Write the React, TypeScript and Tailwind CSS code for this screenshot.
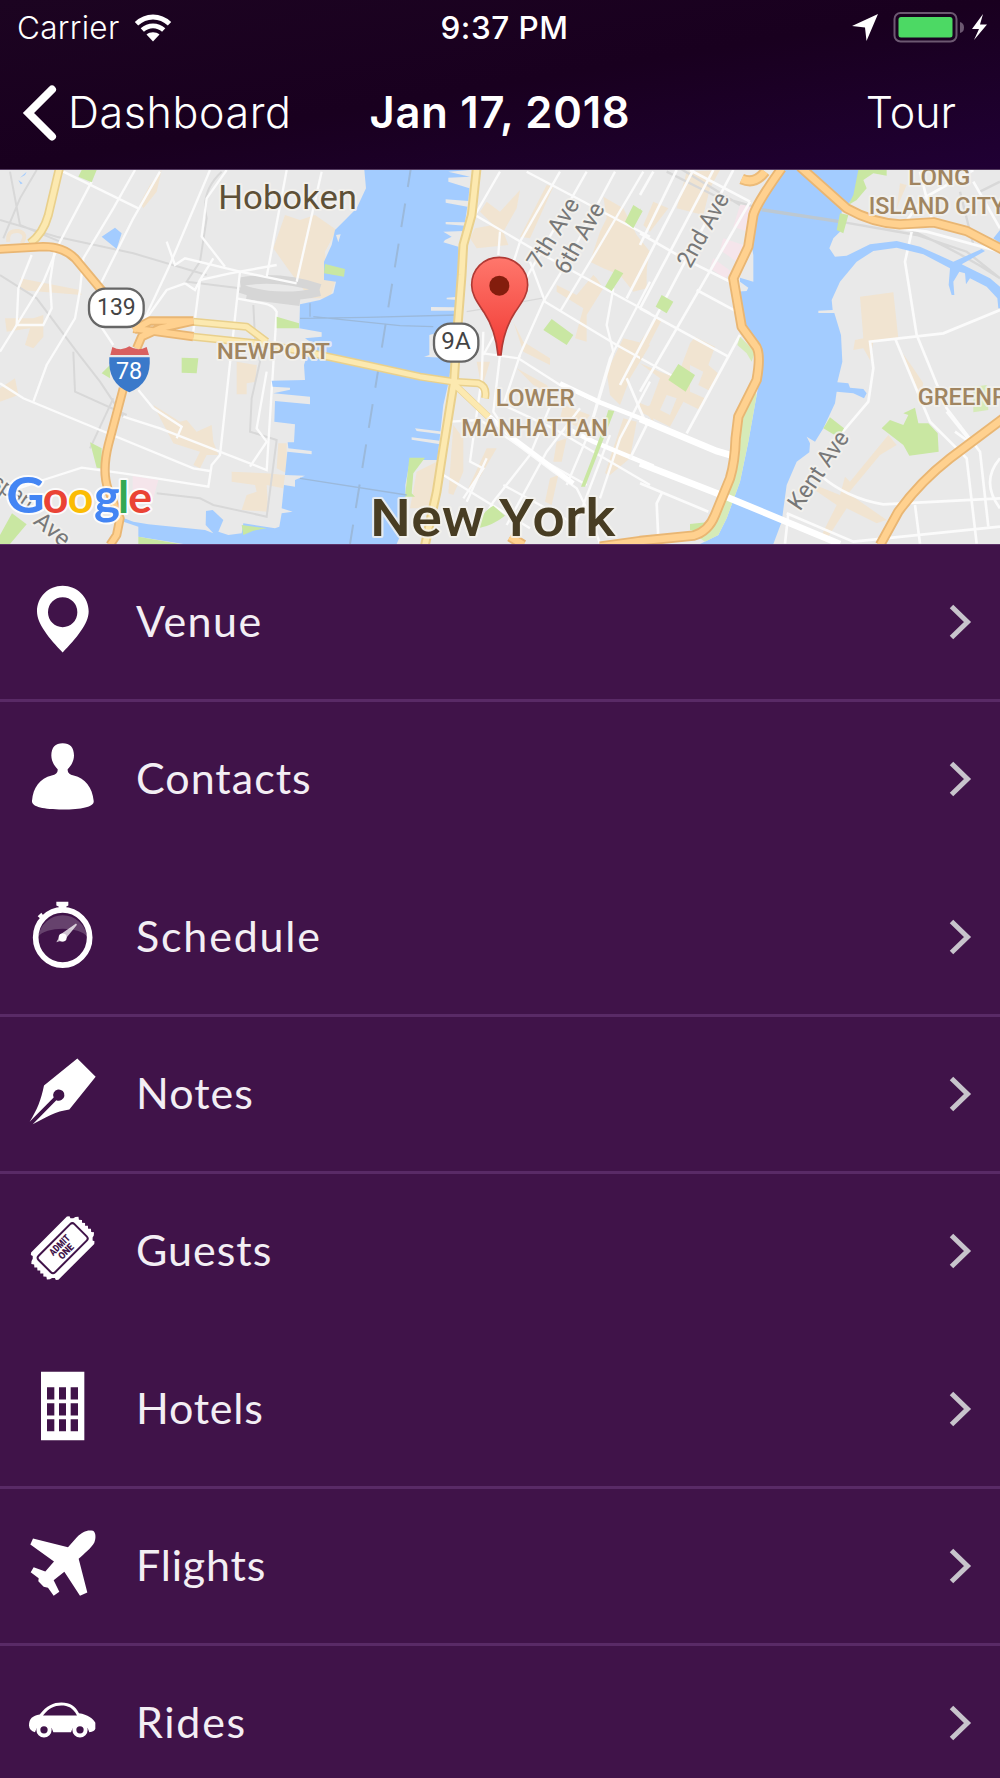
import { ReactNode } from "react";

interface RowProps {
    label: string;
    icon: ReactNode;
    viewBox: string;
    tracking: string;
    divider?: boolean;
}

const rows: RowProps[] = [
    {
        label: "Venue",
        viewBox: "84 66.6 210 240",
        tracking: "tracking-[1.5px]",
        divider: true,
        icon: <path fillRule="evenodd" d="M188 78C145 78 111 112 111 155C111 192 148 236 188 278C228 236 266 192 266 155C266 112 231 78 188 78ZM188 112A44 45 0 1 1 188 202A44 45 0 1 1 188 112Z" />,
    },
    {
        label: "Contacts",
        viewBox: "84 538.5 210 240",
        tracking: "tracking-[1px]",
        icon: <path d="M188 551C166 551 154 563 154 588C154 605 164 621 173 629C174 640 168 645 155 648C120 656 99 684 96 724C94 742 130 750 188 750C246 750 284 742 281 724C277 684 256 656 221 648C208 645 202 640 203 629C212 621 222 605 222 588C222 563 210 551 188 551Z" />,
    },
    {
        label: "Schedule",
        viewBox: "84 80.5 210 240",
        tracking: "tracking-[1.8px]",
        divider: true,
        icon: <>
            <path d="M114 200A75 77 0 0 1 262 200C240 168 136 168 114 200Z" fillOpacity="0.2" />
            <ellipse cx="188" cy="202" rx="81" ry="83" fill="none" stroke="white" strokeWidth="17" />
            <path d="M169 95H205V106L199 109V119H176V109L169 106ZM113 138L124 128L130 136L138 138L122 154L120 144Z" />
            <path d="M169 216L182 192L228 160L231 164L198 204L190 214L178 213Z" fillOpacity="0.75" />
            <circle cx="188" cy="202" r="12" />
        </>,
    },
    {
        label: "Notes",
        viewBox: "84 552.5 210 240",
        tracking: "tracking-[1px]",
        divider: true,
        icon: <path d="M232 566L287 621L208 719C165 725 143 740 98 763L169 691A17 17 0 1 0 161 683L89 756C112 718 123 691 132 647Z" />,
    },
    {
        label: "Guests",
        viewBox: "84 94.5 210 240",
        tracking: "tracking-[1px]",
        icon: <g transform="rotate(-45 188 206)">
            <path d="M112 148H264L270 153L268 159L274 165L281 167L288 173L283 180L289 187L283 193L289 200L283 206L289 212L283 219L289 225L283 232L288 239L281 245L274 247L268 253L270 259L264 264H112L106 259L108 253L102 247L95 245L88 239L93 232L87 225L93 219L87 212L93 206L87 200L93 193L87 187L93 180L88 173L95 167L102 165L108 159L106 153Z" />
            <rect x="112" y="171" width="152" height="70" rx="9" fill="none" stroke="#401349" strokeWidth="6" />
            <g fontFamily="Roboto, sans-serif" fontWeight="900" fontSize="30" fill="#401349" textAnchor="middle">
                <text x="188" y="203" textLength="74" lengthAdjust="spacingAndGlyphs">ADMIT</text>
                <text x="188" y="230" textLength="52" lengthAdjust="spacingAndGlyphs">ONE</text>
            </g>
        </g>,
    },
    {
        label: "Hotels",
        viewBox: "84 566.5 210 240",
        tracking: "tracking-[0.8px]",
        divider: true,
        icon: <path fillRule="evenodd" d="M123 575H253V780H123ZM141 621V658H163V621ZM177 621V658H198V621ZM212 621V658H234V621ZM141 669V706H163V669ZM177 669V706H198V669ZM212 669V706H234V669ZM141 717V753H163V717ZM177 717V753H198V717ZM212 717V753H234V717Z" />,
    },
    {
        label: "Flights",
        viewBox: "84 108.5 210 240",
        tracking: "tracking-[0.8px]",
        divider: true,
        icon: <path d="M99 146L204 172L230 143C247 124 264 119 279 123C288 128 288 146 283 158C275 174 252 192 236 207L262 308L240 318L193 246L161 271L178 306L161 318L144 294L131 291L115 274L116 265L92 247L101 232L136 245L162 215L91 164Z" />,
    },
    {
        label: "Rides",
        viewBox: "84 580.5 210 240",
        tracking: "tracking-[1.7px]",
        icon: <>
            <path fillRule="evenodd" d="M119 675C140 648 160 639 184 639C211 639 226 650 237 671C263 675 280 687 286 700V718Q284 727 268 728A28 28 0 0 0 213 728H160A28 28 0 0 0 105 728Q88 724 87 708C87 688 98 678 119 675ZM129 678H231C219 655 204 648 184 648C163 648 147 656 129 678Z" />
            <circle cx="132" cy="721" r="17" fill="none" stroke="white" strokeWidth="12" />
            <circle cx="240" cy="721" r="17" fill="none" stroke="white" strokeWidth="12" />
        </>,
    },
];

function Row(props: RowProps) {
    return <div className={`flex h-[157.33px] shrink-0 items-center border-b-[3px] pl-7 pr-[28px] ${props.divider ? "border-[#592a66]" : "border-transparent"}`}>
        <svg viewBox={props.viewBox} className="h-20 w-[70px] shrink-0" fill="white">{props.icon}</svg>
        <span className={`ml-[38px] flex-1 pb-[3px] font-['Lato',sans-serif] text-[43px] font-normal leading-none text-[#f3eef4] ${props.tracking}`}>{props.label}</span>
        <svg viewBox="0 0 24 40" className="h-10 w-6" fill="none" stroke="#c8c4cc" strokeWidth="5">
            <path d="M3.5 4.5L19.5 20L3.5 35.5" />
        </svg>
    </div>
}

function StatusBar() {
    return <div className="grid h-14 grid-cols-[1fr_auto_1fr] items-center pl-[17px] pr-[13px] font-['Inter',sans-serif] text-[31.5px] leading-none">
        <div className="flex items-center">
            <span className="w-[102px] whitespace-nowrap font-[350] tracking-[0.3px]">Carrier</span>
            <svg viewBox="0 0 38 28" className="ml-[15px] h-7 w-[38px]">
                <g fill="none" stroke="white" strokeWidth="4.9">
                    <path d="M2.5 9.8C12 0.7 26 0.7 35.5 9.8" />
                    <path d="M8.3 16C14.5 10.5 23.5 10.5 29.7 16" />
                </g>
                <path fill="white" d="M12.5 20.5C16 17.5 22 17.5 25.5 20.5L19 27.5Z" />
            </svg>
        </div>
        <span className="whitespace-nowrap pl-[5px] font-medium tracking-[0.5px]">9:37 PM</span>
        <svg viewBox="0 0 135 32" className="h-8 w-[135px] justify-self-end">
            <path fill="white" d="M26 2L14.5 29L13 15.5L0 14Z" />
            <rect x="42.5" y="1" width="62" height="28.5" rx="6" fill="none" stroke="#6c5871" strokeWidth="2" />
            <rect x="46.5" y="5" width="54" height="20.5" rx="2.5" fill="#4cd964" />
            <path fill="#6c5871" d="M108 10Q112 11 112 15.5Q112 20 108 21Z" />
            <path fill="white" d="M131 2L120 17H127L122 28L135 12.5H128Z" />
        </svg>
    </div>
}

function NavBar() {
    return <div className="grid h-[113px] grid-cols-[1fr_auto_1fr] items-center px-[22px] font-['Inter',sans-serif] text-[43px] leading-none">
        <div className="flex items-center">
            <svg viewBox="0 0 36 58" className="h-[58px] w-9" fill="none" stroke="white" strokeWidth="8" strokeLinecap="round" strokeLinejoin="miter">
                <path d="M30 5.5L6.5 29L30 52.5" />
            </svg>
            <span className="ml-[10px] whitespace-nowrap font-[350] tracking-[0.6px]">Dashboard</span>
        </div>
        <span className="whitespace-nowrap text-[43.5px] font-semibold tracking-[0.75px]">Jan 17, 2018</span>
        <span className="pr-[22px] text-right font-[350]">Tour</span>
    </div>
}

const whiteRoads = [
    "M190 20L415 130",
    "M275 50L180 230L130 350L50 480L0 560",
    "M405 15L340 130L250 280L240 375L225 460L140 600L100 710",
    "M630 15L505 310L430 470",
    "M680 15L620 100L605 215L675 305",
    "M860 15L800 335",
    "M500 230L525 300L555 280L720 320L890 355",
    "M965 20L890 350",
    "M480 20L400 160L290 380",
    "M95 270L55 370L50 480L130 480L155 430L150 350L165 250",
    "M720 320L660 870L635 900L625 965L470 940L370 925L245 908L130 945L0 990",
    "M640 280L600 345L580 500",
    "M0 655L70 700L300 795L580 910L630 918",
    "M370 755L480 790L800 915L830 440Q820 420 790 415L710 400",
    "M800 620L770 790L800 830L750 905",
    "M300 480L340 540M415 675L460 730L545 785L530 820",
    "M555 355L585 375L600 345L690 325L830 300M555 355L500 375L425 480",
];

const eastRoads = [
    "M600 20L525 150L730 270L1050 445",
    "M680 20L1050 215",
    "M780 20L660 230L600 420",
    "M860 20L650 390L550 570",
    "M945 20L790 310L730 410L655 580",
    "M1030 20L900 240L780 440",
    "M1050 350L930 580L860 820L800 960",
    "M600 200L595 270M690 290L735 410L950 540L1130 640",
    "M940 370L920 480L940 560L880 760",
    "M430 930L560 1010L690 1090",
    "M550 565L655 580L780 660L900 715",
    "M600 570L580 740L640 830L760 920L830 970L870 1050L900 1136",
    "M660 570L610 720L760 790L1050 960",
    "M550 500L545 640L510 890L550 910L490 1000",
    "M450 770L540 765L700 870L860 960",
    "M760 700L690 870L580 1010L540 1080",
    "M840 730L740 860L620 1080",
    "M930 810L850 1020L820 1090",
    "M1050 650L960 820L900 1000",
    "M560 880L500 1010M610 960L830 1080",
];

const fineRoads = [
    "M40 20L0 90M110 15L0 240M160 15L-40 400M220 15L0 430M280 15L-60 660",
    "M330 110L180 370L0 680M300 510L140 805",
    "M150 15L330 110M0 205L130 280L290 360M170 375L300 445",
    "M0 430L265 575M-40 640L20 780L-30 880",
    "M815 200L795 290L830 510L920 730L1020 860L1045 1085",
    "M1080 435L910 505L690 530L700 610L685 710L600 810",
    "M765 520L870 770L980 880L1010 1136",
    "M920 740L1000 840L945 800",
    "M0 955L205 1040M65 985L50 1015L55 1120",
    "M540 930Q620 1000 730 1018L1080 1000M825 1020L840 1136",
    "M440 1045L640 1130L1080 1085M445 1045L435 1136M1080 880Q1020 950 1080 1030",
    "M780 190L860 200L1080 260M790 180L850 100L1000 15M840 20L880 180M1000 50L1080 190",
];

interface LabelProps {
    x?: number;
    y?: number;
    width?: number;
    size?: number;
    transform?: string;
    children: string;
}

function Label(props: LabelProps) {
    return <text x={props.x} y={props.y} fontSize={props.size} transform={props.transform} textLength={props.width} lengthAdjust="spacingAndGlyphs">{props.children}</text>
}

// Map units are a third of a pixel; the Manhattan and Queens groups carry their own offset.
function MapView() {
    return <svg viewBox="0 15 3000 1122" className="block h-[374px] w-full shrink-0 bg-[#e9e9e9]" preserveAspectRatio="none" fontFamily="Roboto, sans-serif">
        <g fill="#f1e4d1">
            <path d="M855 150L900 165L945 150L1010 195L975 260L980 325L1005 350L990 400L930 400L870 320L820 250Z" />
            <path d="M60 340L240 375L245 390L60 375ZM15 460L100 460L130 450V515L100 550L75 540L90 490L20 500ZM0 670L45 640L55 690L0 710Z" />
            <path d="M710 590L770 600L768 650L740 655V688H710ZM460 720L540 770L560 765L590 800L635 780L640 830L655 870L620 870L600 910L580 900L600 860L520 835Z" />
            <path d="M695 920L800 925L855 930L850 970L800 960L805 1040L725 1035L740 990L770 980L765 960L695 950ZM835 835H860V925L830 910ZM450 60L485 15L470 80L430 130L420 115Z" />
            <path fill="none" stroke="#f1e4d1" strokeWidth="12" d="M25 230Q20 195 55 198Q85 205 65 235" />
        </g>
        <path fill="#f5e5eb" d="M398 932L475 945L460 1000L398 985Z" />
        <path fill="#a3ccff" d="M305 215L345 188L365 205L350 252ZM60 38L80 20L75 30ZM55 45L68 55L62 58Z" />
        <g fill="none" stroke="#d8d8d8" strokeWidth="6">
            <path d="M0 165L170 215L400 265L620 330M30 20L60 180L180 230M110 15L60 100L10 220M0 330L110 400L230 560L300 650L370 755M220 560L225 680L380 750M340 700L270 850" />
            <path d="M665 20Q600 80 620 160L600 290L560 350L720 370M760 420L765 520L780 590L755 700L750 800L830 825L800 1055L640 1020L600 1000L470 985" />
            <path d="M720 350Q840 330 960 370M720 370Q830 410 960 380M740 390L900 410" strokeWidth="26" stroke="#d6d6d6" />
        </g>
        <g fill="none" stroke="#fbfbfb" strokeWidth="7">
            {whiteRoads.map((d) => <path key={d} d={d} />)}
        </g>
        <g fill="#c9e7a2">
            <path d="M235 35L245 15H290L275 52ZM545 578L595 580L590 625L545 623ZM305 625L330 600V640ZM270 832L305 850V910L290 908ZM36 1045L80 1078L30 1137H0V1110ZM830 455L897 475V490H830Z" />
        </g>

        <g transform="translate(900 0)">
            <path fill="#f1e4d1" d="M560 110L600 140L660 75L650 130L610 200L625 240L530 250L510 220L525 190L580 180L540 140ZM740 60L760 65L690 220L660 215ZM910 95L970 130L1010 210L1050 260L1040 310L1040 370L1000 380L960 330L910 310L870 290L900 200L920 160ZM770 360L830 390L880 330L890 340L910 370L860 450L860 530L825 520L850 430L770 380ZM640 470L670 530L750 580V600L670 560ZM650 610L740 660L760 690L700 660ZM970 520L1050 540L990 640L960 720L930 690L920 620ZM790 720L870 750L840 790L780 760ZM460 780L490 820V920L460 990L445 985ZM560 850L590 850L520 970L505 970ZM970 760L1010 770L990 880L930 930L915 925ZM770 830L800 820L785 890H760ZM750 940L775 930L755 1020L735 1010ZM350 920L410 890L390 1030L330 1030ZM530 590L570 590L545 670ZM1010 710L1060 730V770Z" />
            <path fill="none" stroke="#d8d8d8" strokeWidth="4" d="M500 440L560 430L735 398" />
            <g fill="none" stroke="#fbfbfb" strokeWidth="7">
                {eastRoads.map((d) => <path key={d} d={d} />)}
            </g>
            <path fill="none" stroke="white" strokeWidth="14" d="M780 655L900 712L1060 775M800 790L880 830L1060 905M465 660L640 820L820 955" />
            <path fill="#a3ccff" d="M193 15L198 70L170 130L130 170L105 195L95 240L72 290V345L108 350L100 385L60 405L0 418L-2 490L65 502V515L15 520L45 540L25 560L12 600L15 645L-85 647L-82 665L-30 668L-30 674L-80 685L30 695V718L-75 708L-77 770L-15 778L-18 832L-37 832L-35 850L35 858V868L-38 860L-45 930L15 932L-15 945V965L-48 960L-55 1030L-22 1040L-55 1045L-62 1085L-75 1090L-170 1075L-175 1105L-215 1110L-245 1100L-230 1065L-262 1035L-282 1038L-283 1080L-260 1105L-285 1095L-455 1078L-500 1070L-540 1055L-545 1065L-485 1085V1115L-350 1137H290L310 1090L318 1030L316 960L330 885H412L430 720L445 655L455 590L455 580L372 575L388 570V510L460 490L475 437L393 437V426L470 427L475 405L440 403V398L475 395L480 280L475 245L430 232L435 225L455 215L430 200L490 198L495 182L437 178V171L495 172L502 125L437 113V103L505 108L508 70L445 50V38L510 35L445 20L510 15Z" />
            <path fill="#e9e9e9" d="M345 790L430 800L425 808L350 798ZM335 817L425 828L420 838L335 824ZM108 210L122 208L115 232Z" />
            <path fill="#c9e7a2" d="M75 297L135 312L132 335L72 325ZM328 878H375L340 925L335 985L345 995L315 995ZM975 170L1000 120L1028 138L1000 190ZM915 365L945 312L970 325L935 378ZM730 495L755 462L820 510L800 540ZM925 735L943 738L855 965L843 965L880 870L905 800ZM535 1085Q545 1040 580 1022L615 1052Q580 1080 535 1090ZM-175 1080L-100 1090L-140 1097L-170 1110ZM-485 1115L-360 1137H-485Z" />
            <g fill="none" stroke="#9bb9db" strokeWidth="4">
                <path strokeWidth="6" strokeDasharray="72 50" d="M335 -5L150 1137" />
                <path d="M0 460L200 457L470 450M40 455L300 482L400 485M0 940L320 990M30 415V455" />
            </g>
        </g>

        <g transform="translate(1920 0)">
            <path fill="#f1e4d1" d="M140 20L240 15L210 70L190 150L110 130ZM40 110L85 130L30 200L10 180ZM660 395L760 382L775 520L700 530L690 585L670 550L640 555L645 525L670 520ZM820 610L850 655L840 700L770 540ZM0 595L60 620L110 640L150 535L165 515L225 545L205 600L240 630L180 735L130 710L90 785L0 740L30 720L60 640ZM745 810L770 840L720 870L625 985L740 1065L710 1075L620 1030L555 1130L540 1120L590 1020L510 965L525 960L600 990L615 935L630 950ZM780 55L800 60L770 130ZM0 300L20 310L15 370L0 370ZM0 530L50 460L65 465L0 590ZM0 715L40 750L0 740Z" />
            <path fill="#e9e9e9" d="M150 600L190 620L175 660L215 680L195 700L150 680ZM80 690L110 700L90 750L60 735Z" />
            <path fill="#f5e5eb" d="M300 120H335V205L280 185ZM250 220L310 240L290 290L240 255ZM220 280L275 320L255 340L210 310Z" />
            <path fill="none" stroke="#d8d8d8" strokeWidth="7" d="M80 20L220 90L360 130L600 170L830 210L980 260L1080 340M800 190Q960 260 1080 340M960 80L1000 240M1020 80L1080 50M120 10L300 120" />
            <g fill="none" stroke="#fbfbfb" strokeWidth="8">
                {fineRoads.map((d) => <path key={d} d={d} />)}
            </g>
            <path fill="#a3ccff" d="M430 15L380 90L350 140L335 240L340 270V350L300 338L300 350L325 368L320 378L290 380L300 500L365 560L360 640L350 690L325 830L300 950L260 1060L235 1110L180 1137H400L425 1070L440 960L470 890L508 862L510 835L500 815L525 830L550 790L585 715L590 680L640 685L672 700L680 685L670 672L630 668L625 655L592 652L607 590L603 510L583 444L535 444V437L578 435L575 405L600 350L650 290L700 258L770 248L850 268L930 310L926 360L935 390H943L940 350L958 320L975 325L978 358L990 340L1040 365L1072 400L1075 430H1080V365L1050 340L965 298L1035 258L1025 252L940 290L840 245L770 228L690 238L620 272L585 275L568 250L580 220L600 200L605 140L640 100L655 70L660 15ZM1060 220L1080 195V235Z" />
            <path fill="none" stroke="#bcc8d2" strokeWidth="10" d="M365 134L600 170" />
            <path fill="#c9e7a2" d="M655 15H740V32L700 25L670 45L680 70L650 105L625 120L640 90ZM600 145L625 150L610 205L590 195ZM65 390L100 410L80 445L47 425ZM115 597L165 630L137 680L85 645ZM550 790L570 757L612 790L600 810L580 808ZM725 790L750 765L790 780L805 750L790 745L825 728L835 775L865 775L893 805L896 860L808 872L790 840ZM150 1077L200 1072L180 1105L150 1095ZM0 130L5 140L0 150Z" />
            <path fill="#d6ebb8" d="M340 670L350 690L325 830L300 950L260 1060L235 1110L195 1130L180 1120L230 1040L270 900L300 750ZM300 515L345 560L335 590L320 565L292 540ZM1000 665L1040 660L1045 735L1000 742Z" />
            <path fill="none" stroke="white" strokeWidth="20" d="M0 762L230 858L270 870M0 895L270 1000L600 1137" />
            <path fill="none" stroke="#ecbb78" strokeWidth="33" d="M305 42Q345 60 375 20" />
            <path fill="none" stroke="#ffd290" strokeWidth="21" d="M305 42Q345 60 375 20" />
        </g>

        <g fill="none" strokeLinejoin="round">
            <g stroke="#e9d08c" strokeWidth="27">
                <path d="M178 10L145 150Q130 205 90 235" />
                <path d="M580 470L740 485L800 530M580 515L800 538L960 570L1100 600L1260 635L1360 650M1360 650L1435 655Q1462 665 1455 700" strokeWidth="24" />
                <path d="M1430 10L1415 150L1390 240L1385 330L1370 520L1362 650L1330 850L1310 980L1275 1140" strokeWidth="29" />
            </g>
            <path stroke="#e9d08c" strokeWidth="20" d="M1365 660L1465 755" />
            <g stroke="#fce9b0" strokeWidth="17">
                <path d="M178 10L145 150Q130 205 90 235" />
                <path d="M580 470L740 485L800 530M580 515L800 538L960 570L1100 600L1260 635L1360 650M1360 650L1435 655Q1462 665 1455 700" strokeWidth="15" />
                <path d="M1430 10L1415 150L1390 240L1385 330L1370 520L1362 650L1330 850L1310 980L1275 1140M1365 660L1465 755" />
            </g>
            <g stroke="#e9b673" strokeWidth="31">
                <path d="M-10 253L130 245Q190 245 225 280L350 430M580 468H450L400 495M580 515L400 490M410 550L425 515L480 490L580 468M370 670L325 840Q305 920 325 975L360 1060L350 1110L330 1140" strokeWidth="28" />
                <path d="M1530 1115L1570 1140M1800 1145L1920 1128L2080 1112Q2125 1100 2145 1050L2190 940Q2205 890 2207 820L2215 755L2270 645Q2285 560 2265 540L2225 485L2200 340L2245 245L2260 150Q2270 115 2345 10" />
                <path d="M2400 5L2540 130Q2620 175 2700 178L2800 172L2900 198L3010 255M3010 760L2850 880Q2760 950 2695 1040L2640 1140" />
            </g>
            <g stroke="#ffd18f" strokeWidth="20">
                <path d="M-10 253L130 245Q190 245 225 280L350 430M580 468H450L400 495M580 515L400 490M410 550L425 515L480 490L580 468M370 670L325 840Q305 920 325 975L360 1060L350 1110L330 1140" strokeWidth="17" />
                <path d="M1530 1115L1570 1140M1800 1145L1920 1128L2080 1112Q2125 1100 2145 1050L2190 940Q2205 890 2207 820L2215 755L2270 645Q2285 560 2265 540L2225 485L2200 340L2245 245L2260 150Q2270 115 2345 10" />
                <path d="M2400 5L2540 130Q2620 175 2700 178L2800 172L2900 198L3010 255M3010 760L2850 880Q2760 950 2695 1040L2640 1140" />
            </g>
        </g>

        <g strokeWidth="12" stroke="#f4f2ee" strokeOpacity="0.8" strokeLinejoin="round" paintOrder="stroke">
            <g fill="#5e5037">
                <Label x={655} y={133} size={98} width={416}>Hoboken</Label>
            </g>
            <g fill="#a08561" fontWeight="500">
                <Label x={650} y={582} size={68} width={340}>NEWPORT</Label>
                <Label x={1487} y={724} size={70} width={237}>LOWER</Label>
                <Label x={1384} y={812} size={70} width={440}>MANHATTAN</Label>
                <Label x={2725} y={59} size={69} width={186}>LONG</Label>
                <Label x={2606} y={148} size={69} width={410}>ISLAND CITY</Label>
                <Label x={2753} y={720} size={70} width={268}>GREENP</Label>
            </g>
            <g fill="#483d23" fontWeight="500">
                <Label x={1110} y={1112} size={158} width={736}>New York</Label>
            </g>
            <g fill="#787878">
                <Label transform="translate(1619 315) rotate(-58.5)" size={72} width={232}>7th Ave</Label>
                <Label transform="translate(1702 332) rotate(-60.5)" size={72} width={232}>6th Ave</Label>
                <Label transform="translate(2071 313) rotate(-61)" size={72} width={244}>2nd Ave</Label>
                <Label transform="translate(2400 1040) rotate(-56)" size={72} width={268}>Kent Ave</Label>
                <Label transform="translate(-30 962) rotate(33)" size={68} width={135}>span</Label>
                <Label transform="translate(97 1073) rotate(40)" size={70} width={118}>Ave</Label>
            </g>
        </g>

        <g textAnchor="middle" fill="#444444">
            <rect x="267" y="371" width="164" height="115" rx="50" fill="white" stroke="#666666" strokeWidth="7" />
            <text x="349" y="449" fontSize="70" textLength="116" lengthAdjust="spacingAndGlyphs">139</text>
            <rect x="1302" y="476" width="133" height="114" rx="50" fill="white" stroke="#666666" strokeWidth="7" />
            <text x="1368" y="553" fontSize="70" textLength="88" lengthAdjust="spacingAndGlyphs">9A</text>
            <path fill="#d9605f" d="M337 546Q365 560 388 544Q412 560 440 546L447 570H331Z" />
            <path fill="#3a79ca" d="M328 577H449Q455 655 388 682Q322 655 328 577Z" />
            <text x="387" y="641" fontSize="70" fill="white" textLength="78">78</text>
        </g>

        <g fontFamily="Lato, sans-serif" fontWeight="700" fontSize="134" stroke="white" strokeOpacity="0.85" strokeWidth="12" strokeLinejoin="round" paintOrder="stroke">
            <text x="19" y="1044" fontSize="148" fill="#4385f4" textLength="116" lengthAdjust="spacingAndGlyphs">G</text>
            <text x="128" y="1043" fill="#ea4335">o</text>
            <text x="203" y="1043" fill="#fbbc05">o</text>
            <text x="282" y="1046" fill="#4385f4" fontSize="148">g</text>
            <text x="354" y="1043" fill="#34a853">l</text>
            <text x="385" y="1043" fill="#ea4335">e</text>
        </g>

        <defs>
            <linearGradient id="pin" x1="0" y1="0" x2="0" y2="1">
                <stop offset="0" stopColor="#ff776c" />
                <stop offset="1" stopColor="#f13a34" />
            </linearGradient>
        </defs>
        <path fill="url(#pin)" stroke="#b03a35" strokeWidth="5" d="M1498 277C1450 277 1415 314 1415 360C1415 390 1432 412 1452 442Q1487 495 1494 570H1503Q1510 495 1545 442C1565 412 1583 390 1583 360C1583 314 1546 277 1498 277Z" />
        <circle cx="1498" cy="362" r="30" fill="#831d0d" />
    </svg>
}

function App() {
    return <div className="flex h-[1778px] w-[1000px] flex-col overflow-hidden bg-[#401349] text-white">
        <header className="h-[170px] shrink-0 border-b border-[#543b60] bg-linear-to-br from-[#1c0421] via-[#19001f] to-[#200034]">
            <StatusBar />
            <NavBar />
        </header>
        <MapView />
        <main className="flex flex-col border-t border-[#5d3368]">
            {rows.map((row) => <Row key={row.label} {...row} />)}
        </main>
    </div>
}

export default App;
